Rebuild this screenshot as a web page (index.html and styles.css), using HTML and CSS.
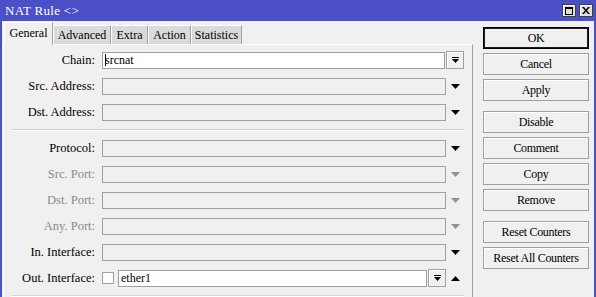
FILE: index.html
```html
<!DOCTYPE html>
<html>
<head>
<meta charset="utf-8">
<link rel="stylesheet" href="styles.css">
</head>
<body>
<div class="window">
  <div class="titlebar">
    <span class="title">NAT Rule &lt;&gt;</span>
    <div class="tb-buttons">
      <span class="tb-btn"><svg width="8" height="8" viewBox="0 0 8 8"><rect x="0.5" y="0.5" width="7" height="7" fill="none" stroke="#000"/><rect x="0" y="0" width="8" height="2" fill="#000"/></svg></span>
      <span class="tb-btn"><svg width="8" height="7" viewBox="0 0 8 7"><path d="M0 0h2l2 2.5L6 0h2L5 3.5 8 7H6L4 4.5 2 7H0l3-3.5z" fill="#000"/></svg></span>
    </div>
  </div>
  <div class="client">
    <div class="left">
      <div class="tabs">
        <div class="tab active w-general">General</div>
        <div class="tab w-advanced">Advanced</div>
        <div class="tab w-extra">Extra</div>
        <div class="tab w-action">Action</div>
        <div class="tab w-stats">Statistics</div>
      </div>
      <div class="panel">
        <div class="form">
          <div class="lbl">Chain:</div>
          <div class="field"><div class="input white gap1"><span class="caret"></span>srcnat</div></div>
          <div class="ddbtn"><svg width="7" height="7" viewBox="0 0 7 7"><rect x="0" y="0" width="7" height="1" fill="#000"/><polygon points="0,2 7,2 3.5,6" fill="#000"/></svg></div>

          <div class="lbl">Src. Address:</div>
          <div class="field"><div class="input"></div></div>
          <div class="arrow"><svg width="9" height="5" viewBox="0 0 9 5"><polygon points="0,0 9,0 4.5,5" fill="#000"/></svg></div>

          <div class="lbl">Dst. Address:</div>
          <div class="field"><div class="input"></div></div>
          <div class="arrow"><svg width="9" height="5" viewBox="0 0 9 5"><polygon points="0,0 9,0 4.5,5" fill="#000"/></svg></div>

          <div class="sep"></div>

          <div class="lbl">Protocol:</div>
          <div class="field"><div class="input"></div></div>
          <div class="arrow"><svg width="9" height="5" viewBox="0 0 9 5"><polygon points="0,0 9,0 4.5,5" fill="#000"/></svg></div>

          <div class="lbl dis">Src. Port:</div>
          <div class="field"><div class="input"></div></div>
          <div class="arrow"><svg width="9" height="5" viewBox="0 0 9 5"><polygon points="0,0 9,0 4.5,5" fill="#8e948e"/></svg></div>

          <div class="lbl dis">Dst. Port:</div>
          <div class="field"><div class="input"></div></div>
          <div class="arrow"><svg width="9" height="5" viewBox="0 0 9 5"><polygon points="0,0 9,0 4.5,5" fill="#8e948e"/></svg></div>

          <div class="lbl dis">Any. Port:</div>
          <div class="field"><div class="input"></div></div>
          <div class="arrow"><svg width="9" height="5" viewBox="0 0 9 5"><polygon points="0,0 9,0 4.5,5" fill="#8e948e"/></svg></div>

          <div class="lbl">In. Interface:</div>
          <div class="field"><div class="input"></div></div>
          <div class="arrow"><svg width="9" height="5" viewBox="0 0 9 5"><polygon points="0,0 9,0 4.5,5" fill="#000"/></svg></div>

          <div class="lbl">Out. Interface:</div>
          <div class="field">
            <span class="check"></span>
            <div class="input white gap1">ether1</div>
            <div class="ddbtn"><svg width="7" height="7" viewBox="0 0 7 7"><rect x="0" y="0" width="7" height="1" fill="#000"/><polygon points="0,2 7,2 3.5,6" fill="#000"/></svg></div>
          </div>
          <div class="arrow"><svg width="9" height="5" viewBox="0 0 9 5"><polygon points="0,5 9,5 4.5,0" fill="#000"/></svg></div>

          <div class="sep"></div>
        </div>
      </div>
    </div>
    <div class="actions">
      <div class="btn default">OK</div>
      <div class="btn">Cancel</div>
      <div class="btn">Apply</div>
      <div class="btn group">Disable</div>
      <div class="btn">Comment</div>
      <div class="btn">Copy</div>
      <div class="btn">Remove</div>
      <div class="btn group">Reset Counters</div>
      <div class="btn">Reset All Counters</div>
    </div>
  </div>
</div>
</body>
</html>
```

FILE: styles.css
```css
html, body {
  margin: 0;
  padding: 0;
  background: #f0f0f0;
}
body {
  font-family: "Liberation Serif", "Times New Roman", serif;
  font-size: 12px;
  color: #000;
}
.window {
  width: 596px;
  height: 297px;
  background: #4b50c8;
  padding: 0 2px;
  box-sizing: border-box;
  display: flex;
  flex-direction: column;
  overflow: hidden;
}
.titlebar {
  height: 21px;
  flex: none;
  display: flex;
  align-items: center;
  justify-content: space-between;
  padding: 0 1px 0 3px;
  color: #fff;
}
.title {
  font-size: 13px;
  letter-spacing: 0.3px;
}
.tb-buttons {
  display: flex;
  gap: 3px;
}
.tb-btn {
  width: 14px;
  height: 13px;
  box-sizing: border-box;
  background: #dedede;
  border: 1px solid #404040;
  box-shadow: inset 1px 1px 0 #fff;
  display: flex;
  align-items: center;
  justify-content: center;
}
.client {
  flex: 1;
  background: #f0f0f0;
  display: flex;
  padding-top: 1px;
}
.left {
  width: 470px;
  margin-left: 1px;
  display: flex;
  flex-direction: column;
}
.tabs {
  height: 22px;
  display: flex;
  align-items: flex-end;
  padding-left: 1px;
  position: relative;
  z-index: 1;
}
.tab {
  height: 19px;
  box-sizing: border-box;
  background: #dadada;
  border-top: 1px solid #fff;
  border-left: 1px solid #fff;
  border-right: 1px solid #a0a0a0;
  display: flex;
  align-items: center;
  justify-content: center;
  padding-top: 1px;
}
.tab.active {
  height: 23px;
  margin-bottom: -1px;
  background: #f0f0f0;
  padding-bottom: 2px;
}
.w-general { width: 49px; }
.w-advanced { width: 58px; }
.w-extra { width: 37px; }
.w-action { width: 43px; }
.w-stats { width: 51px; }
.panel {
  flex: 1;
  border-top: 1px solid #fff;
  border-left: 1px solid #fff;
  border-right: 1px solid #a0a0a0;
  padding: 6px 7px 0 0;
}
.form {
  display: grid;
  grid-template-columns: 98px 344px 18px;
  grid-template-rows: repeat(3, 18px) 2px repeat(6, 18px) 2px;
  row-gap: 8px;
}
.lbl {
  padding-right: 7px;
  text-align: right;
  line-height: 18px;
  white-space: nowrap;
  font-size: 12.5px;
}
.lbl.dis {
  color: #8a8a8a;
}
.field {
  display: flex;
  align-items: center;
}
.input {
  flex: 1;
  height: 17px;
  box-sizing: border-box;
  border: 1px solid #a0a0a0;
  background: #f0f0f0;
  line-height: 15px;
  padding-left: 2px;
  display: flex;
  align-items: center;
}
.input.white {
  background: #fff;
}
.input.gap1 {
  margin-right: 1px;
}
.caret {
  width: 1px;
  height: 12px;
  background: #000;
  margin-right: -1px;
}
.ddbtn {
  width: 18px;
  height: 18px;
  box-sizing: border-box;
  border: 1px solid #a0a0a0;
  box-shadow: inset 1px 1px 0 #fff;
  background: #f0f0f0;
  display: flex;
  align-items: center;
  justify-content: center;
  flex: none;
}
.arrow {
  display: flex;
  align-items: center;
  justify-content: center;
}
.check {
  width: 12px;
  height: 12px;
  box-sizing: border-box;
  border: 1px solid #a0a0a0;
  background: #fff;
  margin-right: 4px;
  flex: none;
}
.sep {
  grid-column: 1 / -1;
  height: 2px;
  margin-left: 7px;
  border-top: 1px solid #d6d6d6;
  background: #fff;
  box-sizing: border-box;
}
.actions {
  margin-left: 10px;
  width: 106px;
  padding-top: 5px;
  display: flex;
  flex-direction: column;
  gap: 4px;
}
.btn {
  height: 22px;
  box-sizing: border-box;
  border: 1px solid #9f9f9f;
  box-shadow: inset 1px 1px 0 #fff;
  background: #f0f0f0;
  display: flex;
  align-items: center;
  justify-content: center;
  white-space: nowrap;
  letter-spacing: -0.3px;
}
.btn.default {
  border: 1px solid #000;
  box-shadow: inset 0 0 0 1px #1e1e1e;
}
.btn.group {
  margin-top: 6px;
}
```
